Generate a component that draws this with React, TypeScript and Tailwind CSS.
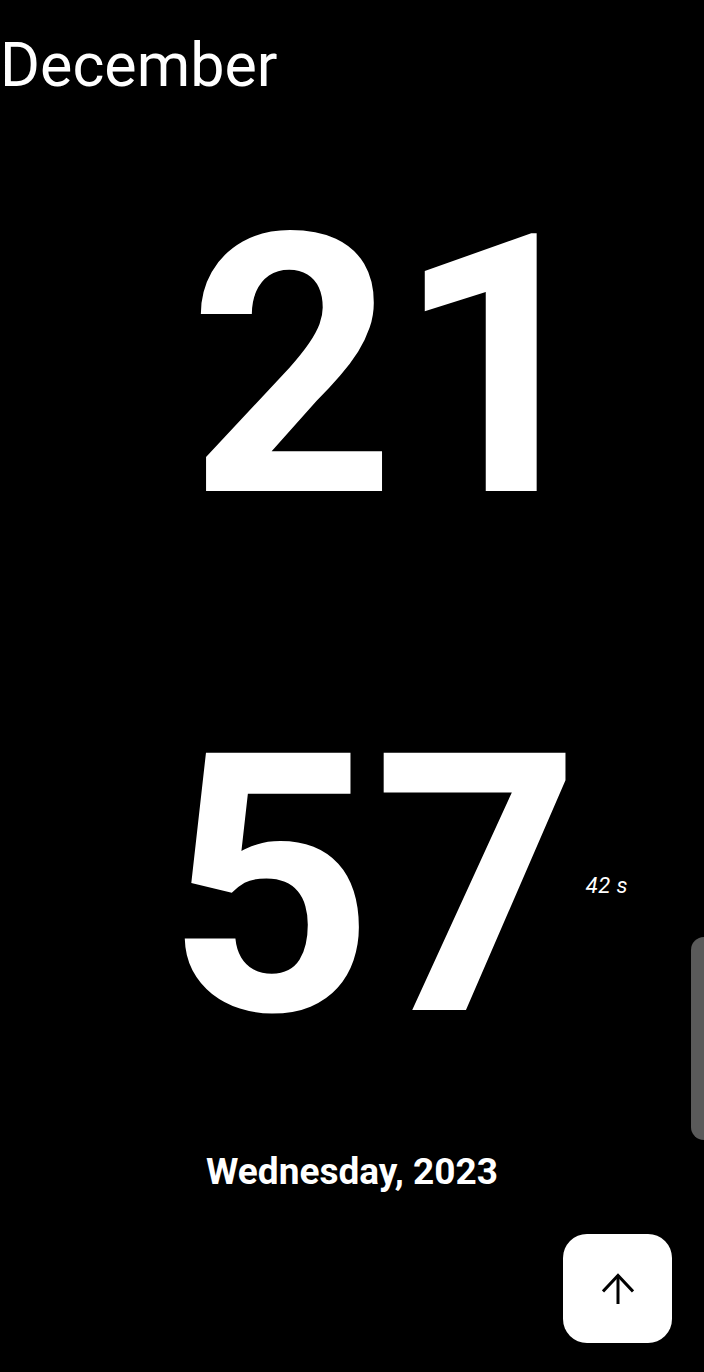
import React from 'react';

// big clock face: month, hour, minute, weekday
export default function App() {
  return (
    <main
      className="relative flex min-h-[1372px] w-full flex-col items-center overflow-hidden bg-black text-white"
      style={{ fontFamily: 'Roboto, "Noto Sans", sans-serif' }}
    >
      <div className="self-start pt-[35px] text-[61px] leading-none font-normal">December</div>

      <div className="mt-[90px] ml-[86px] text-[362px] leading-none font-bold tracking-[-1px]">21</div>

      <div className="relative mt-[157px] ml-[42px] text-[362px] leading-none font-bold tracking-[-1px]">
        57
        <span className="absolute top-1/2 left-full ml-[6px] -translate-y-1/2 text-[22px] leading-none font-normal italic tracking-[0.5px] whitespace-nowrap">
          42 s
        </span>
      </div>

      <div className="mt-[86px] text-[37px] leading-none font-bold">Wednesday, 2023</div>

      {/* edge panel handle */}
      <div className="absolute top-[937px] right-0 h-[203px] w-[13px] rounded-l-[14px] bg-[#5a5a5a]" />

      {/* scroll-to-top button */}
      <button className="absolute top-[1234px] left-[563px] flex h-[109px] w-[109px] items-center justify-center rounded-[24px] bg-white">
        <svg width="32" height="32" viewBox="0 0 32 32" fill="none" stroke="black" strokeWidth="3">
          <path d="M16 31V2" />
          <path d="M1 18.5 16 2.5 31 18.5" />
        </svg>
      </button>
    </main>
  );
}
